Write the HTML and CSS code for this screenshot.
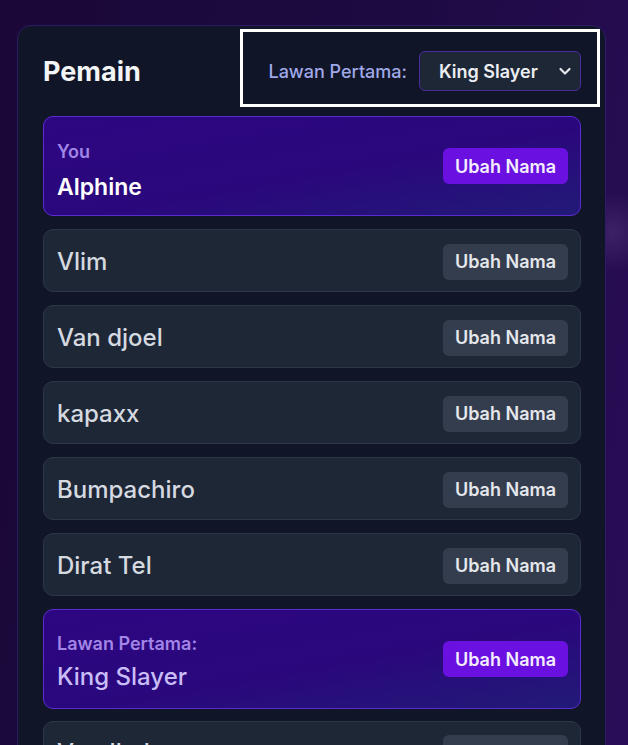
FILE: index.html
```html
<!DOCTYPE html>
<html lang="id">
<head>
<meta charset="utf-8">
<title>Pemain</title>
<link rel="stylesheet" href="styles.css">
</head>
<body>
<main class="panel">
  <header class="panel-head">
    <h2 class="title">Pemain</h2>
    <div class="opponent-pick">
      <span class="pick-label">Lawan Pertama:</span>
      <div class="select">
        <span class="select-value">King Slayer</span>
        <svg class="chev" width="14" height="14" viewBox="0 0 14 14"><path d="M2.5 5l4.5 4.5L11.5 5" fill="none" stroke="#e5e7eb" stroke-width="2.2" stroke-linecap="round" stroke-linejoin="round"/></svg>
      </div>
    </div>
  </header>
  <ul class="players">
    <li class="player player-hl">
      <div class="player-info info-you">
        <span class="tag">You</span>
        <span class="name name-you">Alphine</span>
      </div>
      <button class="btn btn-purple">Ubah Nama</button>
    </li>
    <li class="player"><span class="name">Vlim</span><button class="btn">Ubah Nama</button></li>
    <li class="player"><span class="name">Van djoel</span><button class="btn">Ubah Nama</button></li>
    <li class="player"><span class="name">kapaxx</span><button class="btn">Ubah Nama</button></li>
    <li class="player"><span class="name">Bumpachiro</span><button class="btn">Ubah Nama</button></li>
    <li class="player"><span class="name">Dirat Tel</span><button class="btn">Ubah Nama</button></li>
    <li class="player player-hl">
      <div class="player-info">
        <span class="tag">Lawan Pertama:</span>
        <span class="name name-opp">King Slayer</span>
      </div>
      <button class="btn btn-purple">Ubah Nama</button>
    </li>
    <li class="player player-last"><span class="name">Vandhaka</span><button class="btn">Ubah Nama</button></li>
  </ul>
</main>
</body>
</html>
```
FILE: styles.css
```css
html, body {
  margin: 0;
  height: 100%;
  overflow: hidden;
}
body {
  font-family: Inter, "Noto Sans", sans-serif;
  background:
    radial-gradient(circle at 612px 232px, rgba(90, 60, 130, 0.45) 0, rgba(90, 60, 130, 0) 40px),
    linear-gradient(100deg, #1b0838 0%, #1c0a40 50%, #2a0d58 100%);
  padding: 25px 0 0 17px;
  box-sizing: border-box;
}
.panel {
  width: 589px;
  box-sizing: border-box;
  background: #111528;
  border: 1px solid #2d1c64;
  border-radius: 14px;
  padding: 3px 24px 40px 25px;
}
.panel-head {
  display: flex;
  align-items: center;
  justify-content: space-between;
}
.title {
  margin: 0;
  padding-top: 6px;
  font-size: 27px;
  font-weight: 700;
  color: #f3f4f6;
}
.opponent-pick {
  display: flex;
  align-items: center;
  gap: 12px;
  border: 3px solid #ffffff;
  padding: 19px 16px 13px 25px;
  margin-right: -19px;
}
.pick-label {
  font-size: 18px;
  font-weight: 500;
  color: #a0a9e8;
}
.select {
  width: 162px;
  height: 40px;
  box-sizing: border-box;
  display: flex;
  align-items: center;
  justify-content: space-between;
  padding: 0 8px 0 19px;
  background: #1e2736;
  border: 1px solid #4c2a9e;
  border-radius: 6px;
}
.select-value {
  font-size: 18px;
  font-weight: 600;
  color: #eceef2;
}
.players {
  list-style: none;
  margin: 9px 0 0;
  padding: 0;
  display: flex;
  flex-direction: column;
  gap: 13px;
}
.player {
  height: 63px;
  box-sizing: border-box;
  display: flex;
  align-items: center;
  justify-content: space-between;
  padding: 2px 12px 0 13px;
  background: #1e2736;
  border: 1px solid #2d3648;
  border-radius: 10px;
}
.player-last {
  margin-top: -1px;
  padding-top: 0;
}
.player-hl {
  height: 100px;
  padding-top: 0;
  background: linear-gradient(170deg, #2d0682 0%, #2a087c 55%, #221a78 100%);
  border-color: #5a2ccf;
}
.player-info {
  display: flex;
  flex-direction: column;
  gap: 7px;
  padding-top: 6px;
}
.info-you {
  padding-top: 10px;
}
.tag {
  font-size: 18px;
  line-height: 22px;
  font-weight: 600;
  color: #a285e6;
}
.name {
  font-size: 24px;
  line-height: 29px;
  font-weight: 500;
  color: #d5d9e0;
}
.name-you {
  font-size: 23px;
  line-height: 28px;
  margin-top: 3px;
  font-weight: 600;
  color: #ffffff;
}
.name-opp {
  color: #c9bdf8;
}
.btn {
  font-family: inherit;
  font-size: 18px;
  font-weight: 600;
  color: #e5e7eb;
  background: #343d4e;
  border: 0;
  border-radius: 6px;
  height: 36px;
  width: 125px;
  padding: 0;
}
.btn-purple {
  background: #6a10e0;
  color: #f3eefe;
}
```
